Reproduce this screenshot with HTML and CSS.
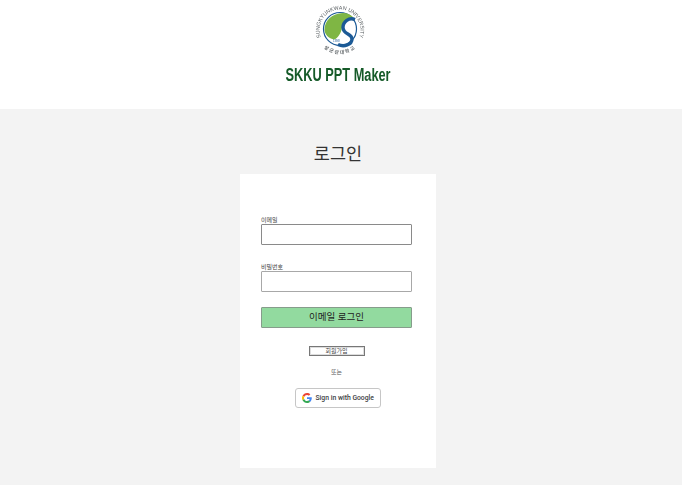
FILE: index.html
```html
<!DOCTYPE html>
<html lang="ko">
<head>
  <meta charset="UTF-8" />
  <meta name="viewport" content="width=device-width, initial-scale=1.0" />
  <title>SKKU PPT Maker</title>
  <link rel="stylesheet" href="styles.css">
</head>
<body>
  <header class="site-header">
    <svg class="logo" viewBox="0 0 54 54" width="54" height="54" aria-label="SKKU logo">
      <defs>
        <path id="ringTop" d="M9.5 36.7 A20.5 20.5 0 1 1 44.5 36.7" />
        <path id="ringBottom" d="M8.6 41.4 A24 24 0 0 0 45.4 41.4" />
      </defs>
      <text class="logo-ring"><textPath href="#ringTop" startOffset="50%" text-anchor="middle">SUNGKYUNKWAN UNIVERSITY</textPath></text>
      <text class="logo-ring-ko"><textPath href="#ringBottom" startOffset="50%" text-anchor="middle">성균관대학교</textPath></text>
      <g transform="translate(1 1.5)">
        <circle cx="26" cy="23.5" r="16.5" fill="#fff" stroke="#1c5a96" stroke-width="1.2" />
        <path d="M10.5 24 C10.5 15 18 8 29 7.5 C34 7.5 37 9.5 39.5 12 C33 13 29 17 28 22 C27 28 24 32 20.5 34 C14.5 33 10.5 29 10.5 24 Z" fill="#7fb644" />
        <path d="M41 14 C35 11.5 29 16 29 22 C29 29 38 28 38 33.5 C38 39 30 42 24 39" fill="none" stroke="#1c5a96" stroke-width="3.4" />
        <text class="logo-year" x="19" y="36">1398</text>
      </g>
    </svg>
    <div class="brand">SKKU PPT Maker</div>
  </header>

  <main class="content">
    <h1>로그인</h1>
    <div class="card">
      <form class="login-form" onsubmit="return false">
        <label class="field-label" for="email">이메일</label>
        <input class="field" id="email" type="email">
        <label class="field-label second" for="password">비밀번호</label>
        <input class="field light" id="password" type="password">
        <button class="email-btn" type="submit">이메일 로그인</button>
        <button class="signup-btn" type="button">회원가입</button>
        <p class="or">또는</p>
        <button class="google-btn" type="button">
          <svg viewBox="0 0 48 48" width="10" height="10">
            <path fill="#EA4335" d="M24 9.5c3.5 0 6.7 1.2 9.2 3.6l6.9-6.9C35.9 2.4 30.5 0 24 0 14.6 0 6.5 5.4 2.6 13.2l8 6.2C12.4 13.7 17.7 9.5 24 9.5z" />
            <path fill="#4285F4" d="M46.98 24.55c0-1.57-.15-3.09-.38-4.55H24v9.02h12.94c-.58 2.96-2.26 5.48-4.78 7.18l7.73 6c4.51-4.18 7.09-10.36 7.09-17.65z" />
            <path fill="#FBBC05" d="M10.53 28.59c-.48-1.45-.76-2.99-.76-4.59s.27-3.14.76-4.59l-7.98-6.19C.92 16.46 0 20.12 0 24c0 3.88.92 7.54 2.56 10.78l7.97-6.19z" />
            <path fill="#34A853" d="M24 48c6.48 0 11.93-2.13 15.89-5.81l-7.73-6c-2.15 1.45-4.92 2.3-8.16 2.3-6.26 0-11.57-4.22-13.47-9.91l-7.98 6.19C6.51 42.62 14.62 48 24 48z" />
          </svg>
          <span>Sign in with Google</span>
        </button>
      </form>
    </div>
  </main>
</body>
</html>
```

FILE: styles.css
```css
body {
  margin: 0;
  font-family: Roboto, "Noto Sans CJK KR", sans-serif;
  background-color: #f3f3f3;
  color: #111;
  min-height: 485px;
  overflow: hidden;
}

.site-header {
  height: 109px;
  padding: 4px 6px 0 0;
  background-color: #fff;
  display: flex;
  flex-direction: column;
  align-items: center;
  box-sizing: border-box;
}

.logo {
  display: block;
  margin-left: 3px;
  filter: blur(0.3px);
}

.logo-ring {
  font-family: "Liberation Sans", sans-serif;
  font-size: 5.3px;
  fill: #555b5e;
}

.logo-ring-ko {
  font-family: "Noto Sans CJK KR", sans-serif;
  font-size: 4.8px;
  font-weight: 700;
  letter-spacing: 1.4px;
  fill: #666b6e;
}

.logo-year {
  font-family: "Liberation Sans", sans-serif;
  font-size: 3px;
  fill: #1c5a96;
}

.brand {
  margin-top: 7px;
  font-family: "Liberation Sans", sans-serif;
  font-size: 18px;
  line-height: 20px;
  font-weight: 700;
  color: #155a28;
  white-space: nowrap;
  transform: scaleX(0.71);
}

.content {
  padding-right: 6px;
  display: flex;
  flex-direction: column;
  align-items: center;
}

h1 {
  margin: 34px 0 9px;
  font-size: 17.5px;
  line-height: 22px;
  font-weight: 400;
  color: #333;
}

.card {
  width: 196px;
  height: 294px;
  background-color: #fff;
  box-sizing: border-box;
  padding: 42px 24px 0 21px;
}

.login-form {
  display: flex;
  flex-direction: column;
}

.field-label {
  font-size: 6px;
  line-height: 8px;
  color: #444;
}

.field-label.second {
  margin-top: 18px;
}

.field {
  box-sizing: border-box;
  width: 151px;
  height: 21px;
  padding: 0 4px;
  border: 1px solid #8a8a8a;
  border-radius: 1px;
  background-color: #fff;
}

.field.light {
  border-color: #a8a8a8;
}

.email-btn {
  box-sizing: border-box;
  width: 151px;
  height: 21px;
  margin-top: 15px;
  padding: 0 0 3px;
  border: 1px solid #869c8b;
  border-radius: 1px;
  background-color: #92da9f;
  font-family: inherit;
  font-size: 9.5px;
  color: #222;
}

.signup-btn {
  box-sizing: border-box;
  align-self: center;
  width: 56px;
  height: 10px;
  margin-top: 18px;
  padding: 0;
  border: 1px solid #777;
  box-shadow: inset 0 0 0 1px #ddd;
  background-color: #fff;
  font-family: inherit;
  font-size: 6px;
  line-height: 8px;
  color: #444;
}

.or {
  align-self: center;
  margin: 11px 0 0;
  font-size: 6px;
  line-height: 9px;
  color: #555;
}

.google-btn {
  box-sizing: border-box;
  align-self: center;
  width: 86px;
  height: 20px;
  margin: 12px 0 0 2px;
  padding: 0 0 0 6px;
  display: flex;
  align-items: center;
  gap: 4px;
  border: 1px solid #c6c6c6;
  border-radius: 3px;
  background-color: #fff;
  font-family: Roboto, sans-serif;
  font-size: 6.8px;
  font-weight: 500;
  color: #3c4043;
  white-space: nowrap;
}
```
